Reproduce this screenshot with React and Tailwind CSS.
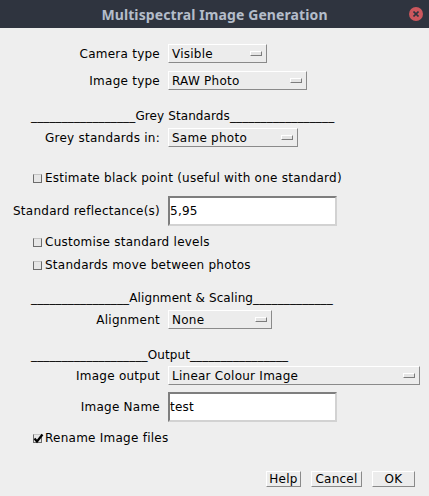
import React from "react";

const font = { fontFamily: '"DejaVu Sans", "Liberation Sans", sans-serif' };

const Drop = ({ width, value }) => (
  <div
    className={`flex h-[19px] items-center justify-between border border-t-white border-l-white border-r-[#8a8a8a] border-b-[#8a8a8a] bg-[#ececec] pl-[3px] pr-[4px] ${width}`}
  >
    <span className="leading-none text-black">{value}</span>
    <span className="h-[5px] w-[12px] border border-t-white border-l-white border-r-[#7c7c7c] border-b-[#7c7c7c] bg-[#e4e4e4]" />
  </div>
);

const Field = ({ value }) => (
  <div className="flex h-[30px] w-[169px] items-center border-2 border-t-[#7e7e7e] border-l-[#7e7e7e] border-r-[#d2d2d2] border-b-[#d2d2d2] bg-white">
    <span className="text-black">{value}</span>
  </div>
);

const Row = ({ label, children, className }) => (
  <div className={`flex items-center ${className}`}>
    <div className="w-[149px] whitespace-nowrap text-right text-black">{label}</div>
    <div className="ml-[8px]">{children}</div>
  </div>
);

const Heading = ({ left, text, right, className }) => (
  <div className={`ml-[20px] h-[18px] whitespace-pre leading-[18px] tracking-[0.1px] text-black ${className}`}>
    <span className="tracking-[0.14px]">{"_".repeat(left)}</span>
    {text}
    <span className="tracking-[0.14px]">{"_".repeat(right)}</span>
  </div>
);

const Check = ({ checked, label, className }) => (
  <div className={`ml-[22px] flex h-[18px] items-center ${className}`}>
    <span className="relative h-[9px] w-[9px] border border-t-[#c4c4c4] border-l-[#6c6c6c] border-b-[#6c6c6c] border-r-[#6c6c6c] bg-[#e6e6e6]">
      {checked && (
        <svg className="absolute -left-[1px] -top-[2px]" width="11" height="11" viewBox="0 0 11 11">
          <path d="M1.5 5.5 L4 8.5 L9.5 1.5" fill="none" stroke="#000" strokeWidth="2.2" />
        </svg>
      )}
    </span>
    <span className="ml-[3px] text-black">{label}</span>
  </div>
);

const Btn = ({ width, children }) => (
  <div
    className={`flex h-[16px] items-center justify-center border border-t-white border-l-white border-r-[#8a8a8a] border-b-[#8a8a8a] bg-[#ececec] text-black ${width}`}
  >
    {children}
  </div>
);

export default function App() {
  return (
    <div className="flex h-[496px] w-[429px] flex-col bg-[#eeeeee] text-[12px] tracking-[0.25px]" style={font}>
      {/* title bar */}
      <div className="relative flex h-[28px] items-center justify-center bg-[#2f343f]">
        <span
          className="text-[14px] font-bold tracking-[0.1px] text-[#b4bdca]"
          style={{ fontFamily: '"Noto Sans", "DejaVu Sans", sans-serif' }}
        >
          Multispectral Image Generation
        </span>
        <div className="absolute right-[6px] top-[7px] flex h-[14px] w-[14px] items-center justify-center rounded-full bg-[#cc575d]">
          <svg width="6" height="6" viewBox="0 0 6 6">
            <path d="M0.5 0.5 L5.5 5.5 M5.5 0.5 L0.5 5.5" stroke="#2f343f" strokeWidth="1.6" />
          </svg>
        </div>
      </div>

      <div className="flex flex-col pl-[11px]">
        <Row label="Camera type" className="mt-[16px]">
          <Drop width="w-[99px]" value="Visible" />
        </Row>
        <Row label="Image type" className="mt-[8px]">
          <Drop width="w-[139px]" value="RAW Photo" />
        </Row>

        <Heading left={17} text="Grey Standards" right={17} className="mt-[17px]" />
        <Row label="Grey standards in:" className="mt-[3px]">
          <Drop width="w-[130px]" value="Same photo" />
        </Row>

        <Check label="Estimate black point (useful with one standard)" className="mt-[22px]" />

        <Row label="Standard reflectance(s)" className="mt-[9px]">
          <Field value="5,95" />
        </Row>

        <Check label="Customise standard levels" className="mt-[7px]" />
        <Check label="Standards move between photos" className="mt-[5px]" />

        <Heading left={16} text="Alignment & Scaling" right={13} className="mt-[15px]" />
        <Row label="Alignment" className="mt-[3px]">
          <Drop width="w-[104px]" value="None" />
        </Row>

        <Heading left={19} text="Output" right={16} className="mt-[17px]" />
        <Row label="Image output" className="mt-[2px]">
          <Drop width="w-[252px]" value="Linear Colour Image" />
        </Row>
        <Row label="Image Name" className="mt-[7px]">
          <Field value="test" />
        </Row>

        <Check checked label="Rename Image files" className="mt-[7px]" />

        <div className="mt-[24px] flex justify-end gap-[10px] pr-[14px]">
          <Btn width="w-[35px]">Help</Btn>
          <Btn width="w-[51px]">Cancel</Btn>
          <Btn width="w-[43px]">OK</Btn>
        </div>
      </div>
    </div>
  );
}
